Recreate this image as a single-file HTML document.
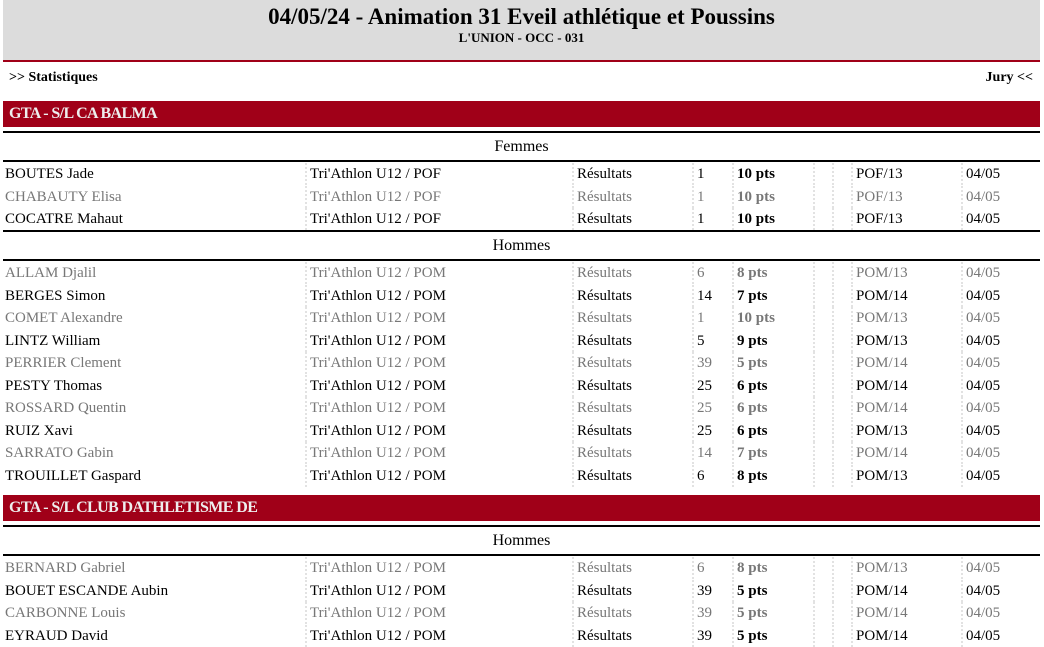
<!DOCTYPE html>
<html><head><meta charset="utf-8"><style>
body{margin:0;width:1044px;height:646px;overflow:hidden;background:#fff;font-family:"Liberation Serif",serif;position:relative}
.hd{position:absolute;left:3px;top:0;width:1037px;height:60px;background:#dcdcdc;border-bottom:2px solid #a00018;text-align:center}
.hd h1{margin:0;padding-top:4px;font-size:23px;font-weight:bold;line-height:26px}
.hd div{font-size:13px;font-weight:bold;line-height:16px}
.lnk{position:absolute;top:70px;font-size:14px;font-weight:bold}
.club{position:absolute;left:3px;width:1037px;height:26px;background:#a00018;color:#eee;font-weight:bold;font-size:16px;line-height:26px;text-indent:6px;letter-spacing:-0.6px}
.sex{position:absolute;left:3px;width:1037px;height:27px;border-top:2px solid #000;border-bottom:2px solid #000;text-align:center;font-size:16px;line-height:27px}
.r{position:absolute;left:3px;width:1037px;height:22.5px;line-height:22.5px;font-size:15px;color:#000}
.r.g{color:#777}
.r span{position:absolute;top:0;height:22px;white-space:nowrap}
.r span.c{border-left:2px dotted #e2e2e2;padding-left:3px}
.r b{font-weight:bold}
</style></head><body>
<div class="hd"><h1>04/05/24 - Animation 31 Eveil athlétique et Poussins</h1><div>L'UNION - OCC - 031</div></div>
<div class="lnk" style="left:9px">&gt;&gt; Statistiques</div>
<div class="lnk" style="right:11px">Jury &lt;&lt;</div>

<div class="club" style="top:101px">GTA - S/L CA BALMA</div>
<div class="sex" style="top:131px">Femmes</div>
<div id="c"></div>
<script>
const rows=[
[163,[["BOUTES Jade","POF",1,10,"POF/13",0],["CHABAUTY Elisa","POF",1,10,"POF/13",1],["COCATRE Mahaut","POF",1,10,"POF/13",0]]],
[262,[["ALLAM Djalil","POM",6,8,"POM/13",1],["BERGES Simon","POM",14,7,"POM/14",0],["COMET Alexandre","POM",1,10,"POM/13",1],["LINTZ William","POM",5,9,"POM/13",0],["PERRIER Clement","POM",39,5,"POM/14",1],["PESTY Thomas","POM",25,6,"POM/14",0],["ROSSARD Quentin","POM",25,6,"POM/14",1],["RUIZ Xavi","POM",25,6,"POM/13",0],["SARRATO Gabin","POM",14,7,"POM/14",1],["TROUILLET Gaspard","POM",6,8,"POM/13",0]]],
[557,[["BERNARD Gabriel","POM",6,8,"POM/13",1],["BOUET ESCANDE Aubin","POM",39,5,"POM/14",0],["CARBONNE Louis","POM",39,5,"POM/14",1],["EYRAUD David","POM",39,5,"POM/14",0]]]];
let h='';
for(const [t0,rs] of rows){rs.forEach((r,i)=>{const t=t0+i*22.55;
h+=`<div class="r${r[5]?' g':''}" style="top:${t}px"><span style="left:2px">${r[0]}</span><span class="c" style="left:302px">Tri'Athlon U12 / ${r[1]}</span><span class="c" style="left:569px">Résultats</span><span class="c" style="left:689px">${r[2]}</span><span class="c" style="left:729px"><b>${r[3]} pts</b></span><span class="c" style="left:810px"></span><span class="c" style="left:829px"></span><span class="c" style="left:848px">${r[4]}</span><span class="c" style="left:958px">04/05</span></div>`;});}
h+='<div class="sex" style="top:230px">Hommes</div>';
h+='<div class="club" style="top:495px">GTA - S/L CLUB DATHLETISME DE</div>';
h+='<div class="sex" style="top:525px">Hommes</div>';
document.getElementById('c').innerHTML=h;
</script>
</body></html>
